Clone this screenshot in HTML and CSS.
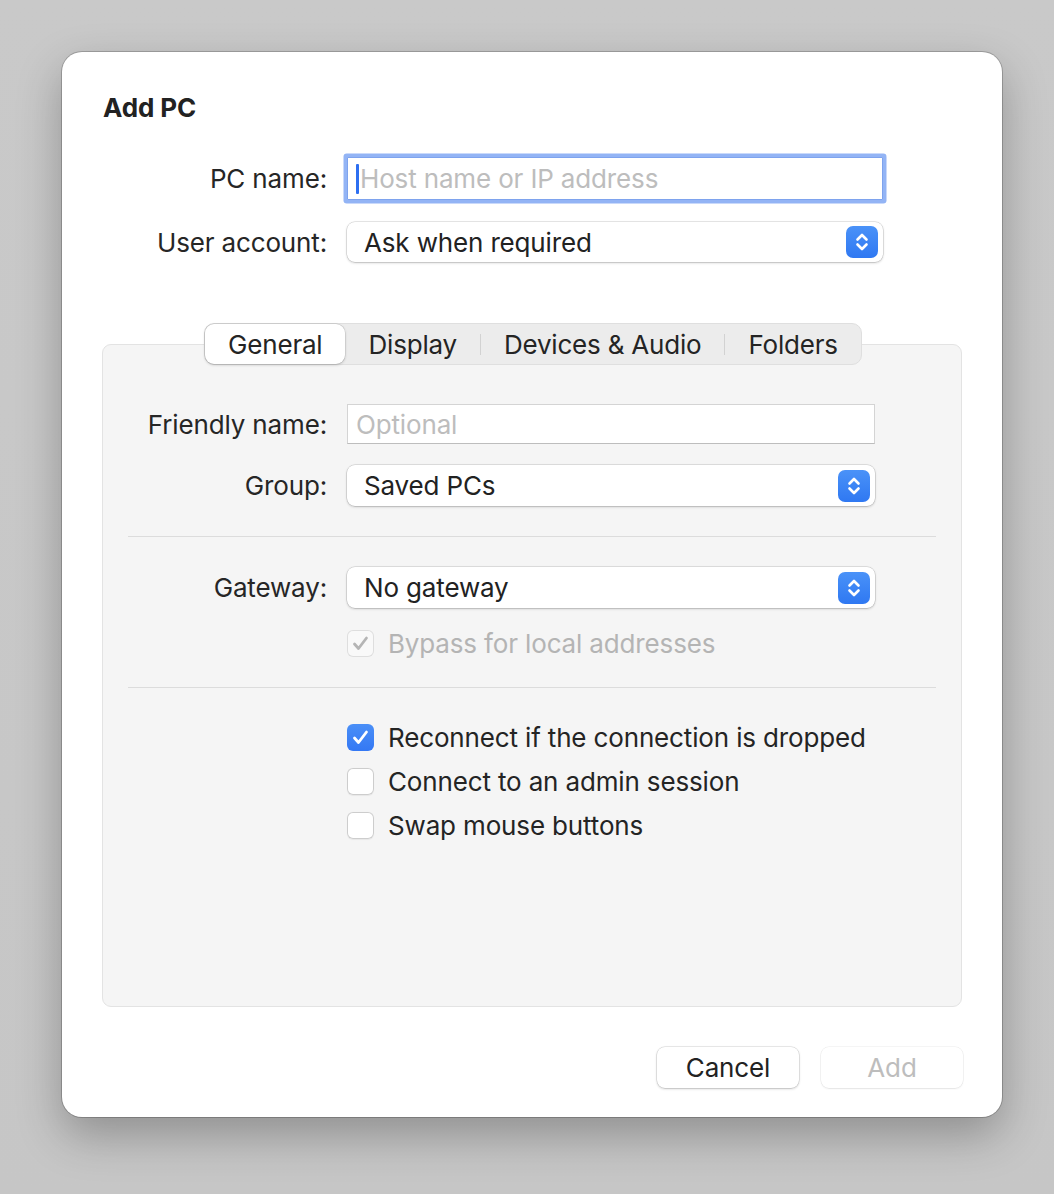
FILE: index.html
```html
<!DOCTYPE html>
<html>
<head>
<meta charset="utf-8">
<link rel="stylesheet" href="styles.css">
</head>
<body>
<div class="dialog">
  <h1 class="title">Add PC</h1>
  <div class="form top-form">
    <div class="row">
      <label class="label">PC name:</label>
      <div class="input focused"><span class="caret"></span><span class="placeholder">Host name or IP address</span></div>
    </div>
    <div class="row">
      <label class="label">User account:</label>
      <div class="select"><span class="value">Ask when required</span><span class="stepper"><svg width="32" height="32" viewBox="0 0 32 32"><path d="M11.5 13.5 L16 9 L20.5 13.5" /><path d="M11.5 18.5 L16 23 L20.5 18.5" /></svg></span></div>
    </div>
  </div>

  <div class="tabs-wrap">
    <div class="tabs">
      <div class="tab active">General</div>
      <div class="tab">Display</div>
      <div class="sep"></div>
      <div class="tab">Devices &amp; Audio</div>
      <div class="sep"></div>
      <div class="tab">Folders</div>
    </div>
  </div>

  <div class="panel">
    <div class="form">
      <div class="row">
        <label class="label">Friendly name:</label>
        <div class="input plain"><span class="placeholder">Optional</span></div>
      </div>
      <div class="row">
        <label class="label">Group:</label>
        <div class="select narrow"><span class="value">Saved PCs</span><span class="stepper"><svg width="32" height="32" viewBox="0 0 32 32"><path d="M11.5 13.5 L16 9 L20.5 13.5" /><path d="M11.5 18.5 L16 23 L20.5 18.5" /></svg></span></div>
      </div>
    </div>
    <div class="divider"></div>
    <div class="form">
      <div class="row">
        <label class="label">Gateway:</label>
        <div class="select narrow"><span class="value">No gateway</span><span class="stepper"><svg width="32" height="32" viewBox="0 0 32 32"><path d="M11.5 13.5 L16 9 L20.5 13.5" /><path d="M11.5 18.5 L16 23 L20.5 18.5" /></svg></span></div>
      </div>
      <div class="check-row disabled bypass">
        <span class="box checked-dis"><svg width="27" height="27" viewBox="0 0 27 27"><path d="M7.5 14 L11.5 18.5 L19.5 8" /></svg></span>
        <span class="check-text">Bypass for local addresses</span>
      </div>
    </div>
    <div class="divider second"></div>
    <div class="checks">
      <div class="check-row">
        <span class="box checked"><svg width="27" height="27" viewBox="0 0 27 27"><path d="M7.5 14 L11.5 18.5 L19.5 8" /></svg></span>
        <span class="check-text">Reconnect if the connection is dropped</span>
      </div>
      <div class="check-row">
        <span class="box"></span>
        <span class="check-text">Connect to an admin session</span>
      </div>
      <div class="check-row">
        <span class="box"></span>
        <span class="check-text">Swap mouse buttons</span>
      </div>
    </div>
  </div>

  <div class="buttons">
    <button class="btn">Cancel</button>
    <button class="btn disabled-btn">Add</button>
  </div>
</div>
</body>
</html>
```

FILE: styles.css
```css
* { box-sizing: border-box; }

html, body {
  margin: 0;
  padding: 0;
}

body {
  width: 1054px;
  height: 1194px;
  background: linear-gradient(180deg, #c9c9c9 0%, #c6c6c6 100%);
  font-family: Inter, "Liberation Sans", sans-serif;
  color: #242424;
  overflow: hidden;
}

.dialog {
  margin: 52px 0 0 62px;
  width: 940px;
  height: 1065px;
  background: #ffffff;
  border-radius: 20px;
  box-shadow: 0 0 0 1px rgba(0, 0, 0, 0.2), 0 18px 45px rgba(0, 0, 0, 0.28);
  padding: 41px 40px 29px 40px;
  display: flex;
  flex-direction: column;
}

.title {
  margin: 0 0 34px 1px;
  font-size: 26px;
  line-height: 30px;
  font-weight: 700;
  color: #222;
  letter-spacing: -0.1px;
}

.form {
  display: flex;
  flex-direction: column;
  gap: 21px;
}

.top-form { gap: 22px; }

.row {
  display: flex;
  align-items: center;
  gap: 20px;
}

.label {
  width: 225px;
  flex: none;
  text-align: right;
  font-size: 26px;
  color: #262626;
  letter-spacing: -0.15px;
}

.panel .label { width: 224px; }

.input {
  width: 536px;
  height: 43px;
  background: #fff;
  border: 1px solid #d4d4d4;
  border-bottom-color: #bdbdbd;
  display: flex;
  align-items: center;
  padding-left: 8px;
  font-size: 26px;
}

.input.focused {
  box-shadow: 0 0 0 3.5px #93b4f5;
  border-color: #7ea3ee;
  border-radius: 1px;
}

.input.plain {
  width: 528px;
  height: 40px;
  padding-left: 8px;
}

.caret {
  width: 3px;
  height: 30px;
  background: #2d6ff1;
  margin-right: 1px;
  border-radius: 1px;
}

.placeholder {
  color: #bdbdbd;
  letter-spacing: -0.15px;
}

.select {
  width: 536px;
  height: 40px;
  background: #fff;
  border-radius: 8px;
  box-shadow: 0 0 0 0.5px rgba(0, 0, 0, 0.18), 0 1px 2.5px rgba(0, 0, 0, 0.2);
  display: flex;
  align-items: center;
  justify-content: space-between;
  padding: 0 5px 0 17px;
  font-size: 26px;
}

.select.narrow { width: 528px; height: 41px; }

.value {
  color: #222;
  letter-spacing: -0.15px;
}

.stepper {
  width: 32px;
  height: 32px;
  border-radius: 7px;
  background: linear-gradient(180deg, #4a92f8 0%, #2f78f2 100%);
  display: flex;
}

.stepper path {
  fill: none;
  stroke: #ffffff;
  stroke-width: 2.6;
  stroke-linecap: round;
  stroke-linejoin: round;
}

.tabs-wrap {
  margin-top: 61px;
  margin-bottom: -21px;
  display: flex;
  justify-content: center;
  position: relative;
  z-index: 1;
}

.tabs {
  display: flex;
  align-items: center;
  height: 42px;
  background: #ececec;
  border: 1px solid #dfdfdf;
  border-radius: 10px;
  margin-left: 2px;
}

.tab {
  height: 40px;
  padding: 0 23px;
  display: flex;
  align-items: center;
  font-size: 26px;
  color: #242424;
  letter-spacing: -0.2px;
}

.tab.active {
  background: #ffffff;
  border-radius: 9px;
  box-shadow: 0 0 0 0.5px rgba(0, 0, 0, 0.12), 0 1px 3px rgba(0, 0, 0, 0.2);
}

.sep {
  width: 1px;
  height: 21px;
  background: #d2d2d2;
}

.panel {
  flex: 1;
  background: #f5f5f5;
  border: 1px solid #e3e3e3;
  border-radius: 9px;
  padding-top: 59px;
  display: flex;
  flex-direction: column;
}

.divider {
  height: 1px;
  background: #dcdcdc;
  margin: 30px 25px 30px 25px;
}

.divider.second { margin: 29px 25px 33px 25px; }

.check-row {
  display: flex;
  align-items: center;
  gap: 14px;
  height: 30px;
  padding-left: 244px;
  font-size: 26px;
}

.bypass { margin-top: -1px; }

.checks {
  display: flex;
  flex-direction: column;
  gap: 14px;
  margin-top: 1px;
}

.box {
  width: 27px;
  height: 27px;
  flex: none;
  border-radius: 6px;
  background: #fff;
  box-shadow: inset 0 0 0 1px #cdcdcd, 0 0.5px 1px rgba(0,0,0,0.06);
  display: flex;
}

.box path {
  fill: none;
  stroke: #fff;
  stroke-width: 2.8;
  stroke-linecap: round;
  stroke-linejoin: round;
}

.box.checked {
  background: linear-gradient(180deg, #4a8ff7 0%, #3478f4 100%);
  box-shadow: none;
}

.box.checked-dis {
  background: #f9f9f9;
  box-shadow: inset 0 0 0 1px #dedede;
}

.box.checked-dis path { stroke: #b5b5b5; }

.check-text {
  color: #242424;
  letter-spacing: -0.15px;
}

.disabled .check-text { color: #b4b4b4; }

.buttons {
  margin-top: 40px;
  display: flex;
  justify-content: flex-end;
  gap: 22px;
  margin-right: -1px;
}

.btn {
  width: 142px;
  height: 41px;
  border: none;
  background: #fff;
  border-radius: 8px;
  box-shadow: 0 0 0 0.5px rgba(0, 0, 0, 0.16), 0 1px 2.5px rgba(0, 0, 0, 0.2);
  font-family: Inter, "Liberation Sans", sans-serif;
  font-size: 26px;
  color: #222;
  letter-spacing: -0.15px;
  padding: 0;
}

.btn.disabled-btn {
  color: #bdbdbd;
  box-shadow: 0 0 0 0.5px rgba(0, 0, 0, 0.08), 0 1px 2px rgba(0, 0, 0, 0.07);
}
```
